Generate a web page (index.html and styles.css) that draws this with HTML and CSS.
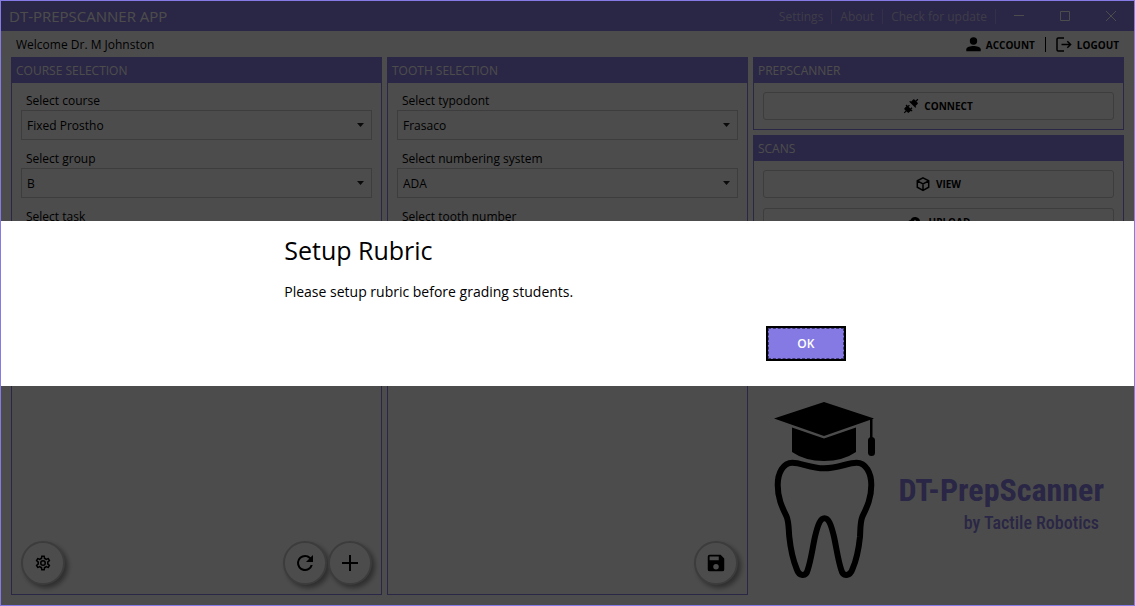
FILE: index.html
```html
<!DOCTYPE html>
<html lang="en">
<head>
<meta charset="utf-8">
<meta name="viewport" content="width=device-width, initial-scale=1">
<title>DT-PrepScanner App</title>
<link rel="stylesheet" href="styles.css">
</head>
<body>
<div class="window">
  <header class="titlebar">
    <h1 class="app-title">DT-PREPSCANNER APP</h1>
    <nav class="title-links">
      <a href="#settings">Settings</a>
      <a href="#about">About</a>
      <a href="#update">Check for update</a>
    </nav>
    <div class="window-controls">
      <button type="button" aria-label="Minimize"><svg width="10" height="10" viewBox="0 0 10 10"><path d="M0 4.5h10"/></svg></button>
      <button type="button" aria-label="Maximize"><svg width="10" height="10" viewBox="0 0 10 10"><path d="M.5.5h9v9h-9z"/></svg></button>
      <button type="button" aria-label="Close"><svg width="10" height="10" viewBox="0 0 10 10"><path d="M0 0l10 10M10 0L0 10"/></svg></button>
    </div>
  </header>

  <div class="userbar">
    <span class="welcome">Welcome Dr. M Johnston</span>
    <div class="user-actions">
      <button type="button" class="user-button">
        <svg width="15" height="15" viewBox="0 0 15 15"><circle cx="7.5" cy="4" r="3.7"/><path d="M.3 14.3v-2c0-2.200 4.200-3.300 7.200-3.300s7.200 1.100 7.200 3.300v2z"/></svg>
        ACCOUNT
      </button>
      <button type="button" class="user-button">
        <svg class="line" width="16" height="15" viewBox="0 0 16 15"><path d="M8 1H2.200Q1 1 1 2.200v10.600Q1 14 2.200 14H8M5.500 7.500h9M11.300 4.200l3.300 3.300-3.300 3.300"/></svg>
        LOGOUT
      </button>
    </div>
  </div>

  <main class="columns">
    <section class="panel">
      <h2 class="panel-title">COURSE SELECTION</h2>
      <div class="panel-body">
        <div class="field"><label for="course">Select course</label><select id="course"><option>Fixed Prostho</option></select></div>
        <div class="field"><label for="group">Select group</label><select id="group"><option>B</option></select></div>
        <div class="field"><label for="task">Select task</label><select id="task"></select></div>
        <div class="round-actions">
          <button type="button" class="round first" aria-label="Course settings"><svg width="18" height="18" viewBox="0 0 24 24"><path d="M12 8a4 4 0 0 1 4 4 4 4 0 0 1-4 4 4 4 0 0 1-4-4 4 4 0 0 1 4-4m0 2a2 2 0 0 0-2 2 2 2 0 0 0 2 2 2 2 0 0 0 2-2 2 2 0 0 0-2-2m-2 12c-.25 0-.46-.18-.5-.42l-.37-2.650c-.63-.25-1.170-.59-1.690-.99l-2.490 1.010c-.22.080-.49 0-.61-.22l-2-3.460c-.13-.22-.07-.49.12-.64l2.110-1.660L4.500 12l.07-1-2.110-1.630c-.19-.15-.25-.42-.12-.64l2-3.460c.12-.22.39-.31.61-.22l2.490 1c.52-.39 1.060-.73 1.690-.98l.37-2.650c.04-.24.25-.42.5-.42h4c.25 0 .46.180.5.420l.37 2.650c.63.250 1.170.590 1.690.980l2.490-1c.22-.09.490 0 .610.220l2 3.460c.13.220.07.490-.12.640L19.430 11l.07 1-.07 1 2.110 1.630c.19.150.25.420.12.640l-2 3.460c-.12.220-.39.310-.61.220l-2.490-1c-.52.390-1.060.730-1.690.980l-.37 2.650c-.04.240-.25.420-.5.420h-4m1.250-18l-.37 2.610c-1.200.25-2.260.890-3.030 1.780L5.440 7.350l-.75 1.300L6.800 10.200c-.4 1.170-.4 2.430 0 3.600l-2.120 1.560.75 1.300 2.430-1.040c.77.880 1.820 1.520 3.010 1.760l.37 2.620h1.520l.37-2.610c1.190-.25 2.240-.89 3.010-1.770l2.430 1.040.75-1.300-2.120-1.550c.4-1.170.4-2.440 0-3.610l2.110-1.550-.75-1.300-2.410 1.040a5.420 5.420 0 0 0-3.030-1.770L12.750 4h-1.500z"/></svg></button>
          <button type="button" class="round" aria-label="Refresh"><svg width="24" height="24" viewBox="0 0 24 24"><path d="M17.650 6.350A7.950 7.950 0 0 0 12 4a8 8 0 1 0 7.730 10h-2.080A6 6 0 1 1 12 6c1.660 0 3.140.690 4.220 1.780L13 11h7V4l-2.350 2.350z"/></svg></button>
          <button type="button" class="round" aria-label="Add"><svg width="24" height="24" viewBox="0 0 24 24"><path d="M20 13h-7v7h-2v-7H4v-2h7V4h2v7h7z"/></svg></button>
        </div>
      </div>
    </section>

    <section class="panel">
      <h2 class="panel-title">TOOTH SELECTION</h2>
      <div class="panel-body">
        <div class="field"><label for="typodont">Select typodont</label><select id="typodont"><option>Frasaco</option></select></div>
        <div class="field"><label for="system">Select numbering system</label><select id="system"><option>ADA</option></select></div>
        <div class="field"><label for="tooth">Select tooth number</label><select id="tooth"></select></div>
        <div class="round-actions">
          <button type="button" class="round" aria-label="Save"><svg width="22" height="22" viewBox="0 0 24 24"><path d="M15 9H5V5h10m-3 14a3 3 0 1 1 0-6 3 3 0 0 1 0 6m5-16H5a2 2 0 0 0-2 2v14a2 2 0 0 0 2 2h14a2 2 0 0 0 2-2V7z"/></svg></button>
        </div>
      </div>
    </section>

    <div class="side">
      <section class="panel">
        <h2 class="panel-title">PREPSCANNER</h2>
        <div class="panel-body">
          <button type="button" class="wide"><svg width="14" height="14" viewBox="0 0 16 16"><g transform="rotate(-45 8 8)"><path d="M-3 7.400h4V8.800h-4zM0 5.500Q0 4.500 1 4.500h3V3.200h1.500v9.800H4V11.700H1Q0 11.700 0 10.700zM5 5.300h2.400v1.500H5zM5 9.400h2.400v1.500H5zM10 3.200h1.500v1.300H15q1 0 1 1v5.200q0 1-1 1h-3.500V13H10zM15 7.400h4V8.800h-4z"/></g></svg>CONNECT</button>
        </div>
      </section>
      <section class="panel">
        <h2 class="panel-title">SCANS</h2>
        <div class="panel-body">
          <button type="button" class="wide"><svg class="line" width="14" height="14" viewBox="0 0 14 14"><path d="M7 .8l5.700 3v6.400L7 13.300l-5.700-3.100V3.800zM1.300 3.800L7 7l5.700-3.200M7 7v6.300"/></svg>VIEW</button>
          <button type="button" class="wide"><svg width="16" height="14" viewBox="0 0 16 14"><path fill-rule="evenodd" d="M4 13a4 4 0 0 1-.5-7.900A5 5 0 0 1 13 6a3.500 3.500 0 0 1-.5 7zM7 10.500h2V8h2L8 4.500 5 8h2z"/></svg>UPLOAD</button>
        </div>
      </section>
      <div class="brand">
        <svg class="tooth" width="102" height="178" viewBox="0 0 102 178">
          <path d="M0 16.500L50 0l50 16.500L50 34z"/>
          <path d="M18 25.500L50 36.500l32-11V50Q69 59 50 59T18 50z"/>
          <path d="M96 16h2.500v20h-2.500z"/>
          <rect x="94" y="35" width="7" height="19" rx="3.500"/>
          <path class="outline" d="M50 66.300C37 66.300 27 60.700 18.500 60.700C9 60.700 3.700 71 3.700 83C3.700 97 8.500 106 12.700 114.700C15 121 14.500 127 15.300 134.700C16.500 146 19 158 22.700 167C25 174.500 32 175 33.700 168C37 158 38.500 146 41 134.700C44 122 46.500 116.300 50.500 116.300C54.500 116.300 57 122 60 134.700C62.500 146 64 158 67.300 168C69 175 76 174.500 78.500 167C82.500 158 84.800 146 86 134.700C86.500 127 86 121 88.300 114.700C92.500 106 97.300 97 97.300 83C97.300 71 92 60.700 82.500 60.700C74 60.700 64 66.300 50 66.300z"/>
        </svg>
        <div class="brand-text">
          <span class="brand-name">DT-PrepScanner</span>
          <span class="brand-by">by Tactile Robotics</span>
        </div>
      </div>
    </div>
  </main>

  <div class="overlay">
    <div class="dialog" role="dialog" aria-modal="true" aria-labelledby="dialog-title">
      <div class="dialog-content">
        <h2 id="dialog-title" class="dialog-title">Setup Rubric</h2>
        <p class="dialog-message">Please setup rubric before grading students.</p>
        <button type="button" class="ok"><span>OK</span></button>
      </div>
    </div>
  </div>
</div>
</body>
</html>
```
FILE: styles.css
```css
* { box-sizing: border-box; }

body {
  margin: 0;
  font: 12px/18px "Open Sans", "Noto Sans", sans-serif;
  color: #000;
}

h1, h2, p { margin: 0; font-weight: 400; }

button, select { font: inherit; color: inherit; }

button {
  display: flex;
  align-items: center;
  justify-content: center;
  padding: 0;
  border: 0;
  background: none;
}

svg { flex: none; overflow: visible; }

.line { fill: none; stroke: #000; stroke-width: 1.500; }

.window {
  position: relative;
  display: flex;
  flex-direction: column;
  min-height: 100vh;
  border: 1px solid #857ae6;
  background: #fff;
}

.titlebar {
  display: flex;
  align-items: center;
  height: 30px;
  padding-left: 8px;
  background: #8c7fe6;
  color: #fff;
}

.app-title { flex: 1; font-size: 15px; }

.title-links { display: flex; }

.title-links a {
  padding: 0 8px;
  border-right: 1px solid #b0a6ee;
  color: #d0caf6;
  line-height: 15px;
  text-decoration: none;
}

.window-controls { display: flex; }

.window-controls button { width: 46px; height: 30px; }

.window-controls svg { fill: none; stroke: #fff; stroke-width: 1; }

.userbar {
  display: flex;
  align-items: center;
  justify-content: space-between;
  height: 26px;
  padding: 1px 15px 0;
}

.user-actions { display: flex; }

.user-button {
  gap: 5px;
  height: 15px;
  font-size: 10px;
  font-weight: 700;
}

.user-button + .user-button {
  margin-left: 10px;
  padding-left: 10px;
  border-left: 1px solid #000;
}

.columns {
  flex: 1;
  display: grid;
  grid-template-columns: 37fr 36fr 37fr;
  gap: 5px;
  padding: 0 10px 10px;
}

.panel {
  display: flex;
  flex-direction: column;
  border: 1px solid #8c7fe6;
}

.panel-title {
  padding: 4px 4px 3px;
  background: #8c7fe6;
  color: #fff;
  font-size: 12px;
  line-height: 18px;
}

.panel-body {
  flex: 1;
  display: flex;
  flex-direction: column;
  gap: 10px;
  padding: 9px;
}

.field { display: flex; flex-direction: column; }

.field label { padding-left: 5px; }

.field select {
  appearance: none;
  height: 30px;
  padding: 1px 5px 0;
  border: 1px solid #ccc;
  border-radius: 0;
  background: url("data:image/svg+xml,%3Csvg xmlns='http://www.w3.org/2000/svg' width='7' height='4'%3E%3Cpath d='M0 0h7L3.500 4z' fill='%23222'/%3E%3C/svg%3E") no-repeat right 7px center;
}

.round-actions {
  display: flex;
  justify-content: flex-end;
  gap: 1px;
  margin-top: auto;
}

.round {
  width: 44px;
  height: 44px;
  border: 2px solid #c8c8c8;
  border-radius: 50%;
  background: #fff;
  box-shadow: 3px 3px 5px #999;
}

.first { margin-right: auto; }

.side { display: flex; flex-direction: column; gap: 5px; }

.wide {
  gap: 6px;
  height: 28px;
  border: 1px solid #ccc;
  border-radius: 3px;
  font-size: 10px;
  font-weight: 700;
}

.brand {
  display: flex;
  align-items: center;
  justify-content: space-between;
  margin-top: auto;
  padding: 0 20px 15px 21px;
}

.tooth .outline { fill: none; stroke: #000; stroke-width: 6; }

.brand-text {
  display: flex;
  flex-direction: column;
  align-items: flex-end;
  padding-top: 26px;
  color: #8c7fe6;
  font-family: "Roboto Condensed", "Liberation Sans Narrow", Roboto, sans-serif;
  font-weight: 700;
}

.brand-name { font-size: 32px; line-height: 38px; }

.brand-by { padding-right: 5px; font-size: 18px; font-weight: 500; line-height: 28px; }

.overlay {
  position: absolute;
  inset: 0;
  display: flex;
  align-items: center;
  background: rgba(0, 0, 0, 0.7);
}

.dialog {
  flex: 1;
  display: flex;
  justify-content: center;
  background: #fff;
}

.dialog-content {
  display: flex;
  flex-direction: column;
  width: 50%;
  padding: 12px 5px 25px 0;
}

.dialog-title { font-size: 25px; line-height: 34px; }

.dialog-message { margin-top: 14px; font-size: 14px; line-height: 22px; }

.ok {
  align-self: flex-end;
  width: 80px;
  height: 35px;
  margin-top: 23px;
  border: 2px solid #000;
  background: #857ae3;
  color: #fff;
  font-weight: 600;
}

.ok span {
  flex: 1;
  align-self: stretch;
  border: 1px dashed #3f3970;
  line-height: 29px;
}
```
